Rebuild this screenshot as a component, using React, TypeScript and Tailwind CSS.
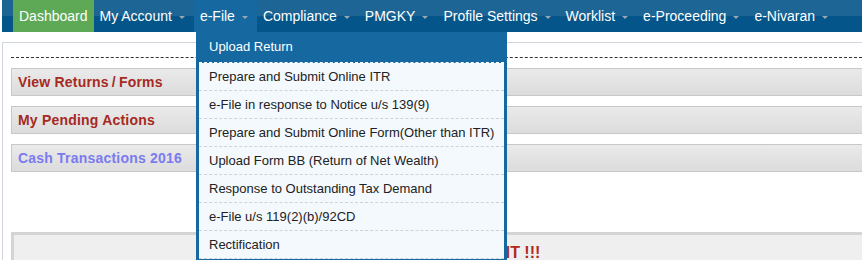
import React from "react";

const navItems = [
  "My Account",
  "e-File",
  "Compliance",
  "PMGKY",
  "Profile Settings",
  "Worklist",
  "e-Proceeding",
  "e-Nivaran",
];

const menuItems = [
  "Prepare and Submit Online ITR",
  "e-File in response to Notice u/s 139(9)",
  "Prepare and Submit Online Form(Other than ITR)",
  "Upload Form BB (Return of Net Wealth)",
  "Response to Outstanding Tax Demand",
  "e-File u/s 119(2)(b)/92CD",
  "Rectification",
];

function Caret() {
  return (
    <span className="ml-[7px] mt-[2px] inline-block h-0 w-0 border-x-[3px] border-t-[3px] border-x-transparent border-t-[#9aa6b2]" />
  );
}

export default function App() {
  return (
    <div className="relative h-[260px] w-[862px] overflow-hidden bg-white pl-[2px] font-['Liberation_Sans',Arial,sans-serif]">
      {/* Nav bar */}
      <nav className="flex h-8 bg-[linear-gradient(to_bottom,#1d6594_0%,#1d6594_50%,#03558a_50%,#03558a_100%)] pl-[11px] text-[14px] text-white">
        <div className="flex h-8 items-center bg-[#5ea956] px-[6px]">Dashboard</div>
        {navItems.map((item) => (
          <div
            key={item}
            className={
              item === "e-File"
                ? "flex h-8 items-center bg-[#1569a0] pl-[6px] pr-[9px]"
                : "flex h-8 items-center pl-[6px] pr-[9px]"
            }
          >
            <span>{item}</span>
            <Caret />
          </div>
        ))}
      </nav>

      {/* Content */}
      <div className="pt-[10px]">
        <div className="border-l border-t border-[#d0d4dc] pl-[8px] pt-[14px]">
          <div className="border-t border-dashed border-[#333]" />
          <div className="mt-[10px] flex flex-col gap-[10px]">
            <div className="flex h-[28px] items-center border-y border-l border-[#c8c8c8] bg-[linear-gradient(to_bottom,#eaeaeb,#dcdcdd)] pl-[6px] text-[14px] font-bold tracking-[0.2px] text-[#a52a22]">
              View Returns<span className="mx-[3px]">/</span>Forms
            </div>
            <div className="flex h-[28px] items-center border-y border-l border-[#c8c8c8] bg-[linear-gradient(to_bottom,#eaeaeb,#dcdcdd)] pl-[6px] text-[14px] font-bold tracking-[0.2px] text-[#a52a22]">
              My Pending Actions
            </div>
            <div className="flex h-[28px] items-center border-y border-l border-[#c8c8c8] bg-[linear-gradient(to_bottom,#eaeaeb,#dcdcdd)] pl-[6px] text-[14px] font-bold tracking-[0.2px] text-[#7b7bef]">
              Cash Transactions 2016
            </div>
          </div>
          <div className="mt-[60px] h-[40px] border-l-[3px] border-t-[3px] border-[#d4d4d4] bg-[#efefef] pl-[412px] pt-[6px] text-[16px] font-bold text-[#b0281f]">
            IMPORTANT !!!
          </div>
        </div>
      </div>

      {/* Dropdown */}
      <div className="absolute left-[196px] top-[32px] w-[311px] border-x-[3px] border-b-[2px] border-[#1569a0] bg-[#f3f9fd] text-[13px]">
        <div className="flex h-[31px] items-center border-b border-dashed border-white bg-[#1569a0] pl-[10px] text-white">
          Upload Return
        </div>
        {menuItems.map((m) => (
          <div
            key={m}
            className="flex h-[28px] items-center border-b border-dashed border-[#cfd3d6] pl-[10px] text-[#222]"
          >
            {m}
          </div>
        ))}
      </div>
    </div>
  );
}
